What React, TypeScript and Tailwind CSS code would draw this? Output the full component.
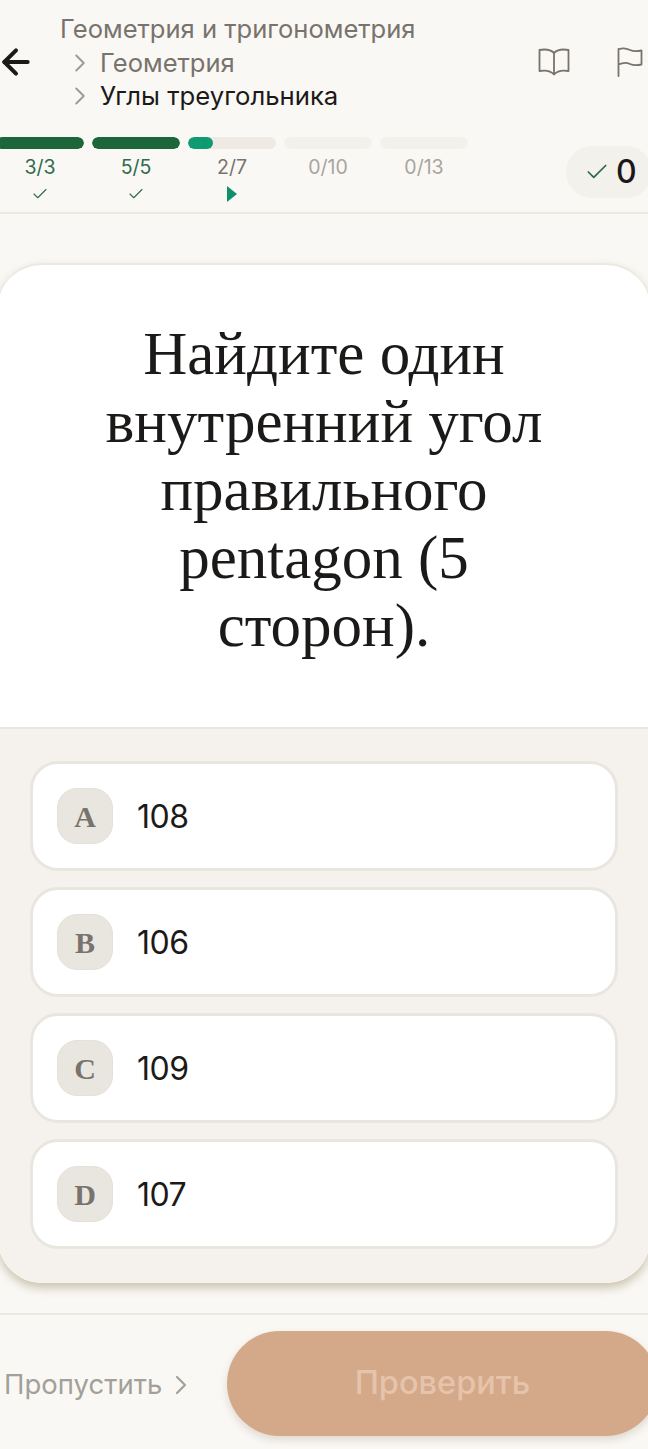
import React from 'react';
import { ArrowLeft, Check, ChevronRight } from 'lucide-react';

const sans = 'font-["Inter","Noto_Sans",sans-serif]';

const steps = [
  { label: '3/3', fill: 'w-full bg-[#1c6639]', text: 'text-[#2f6b4a]', mark: 'check' },
  { label: '5/5', fill: 'w-full bg-[#1c6639]', text: 'text-[#2f6b4a]', mark: 'check' },
  { label: '2/7', fill: 'w-[25px] bg-[#0f9a72]', text: 'text-[#78736c]', track: 'bg-[#efebe4]', mark: 'play' },
  { label: '0/10', fill: 'w-0', text: 'text-[#a8a49d]', track: 'bg-[#f3f1ec]' },
  { label: '0/13', fill: 'w-0', text: 'text-[#a8a49d]', track: 'bg-[#f3f1ec]' },
];

const options = [
  { key: 'A', value: '108' },
  { key: 'B', value: '106' },
  { key: 'C', value: '109' },
  { key: 'D', value: '107' },
];

function BookIcon() {
  return (
    <svg width="32" height="28" viewBox="0 0 32 28" fill="none" stroke="#78736c" strokeWidth="1.8" strokeLinejoin="round" className="shrink-0">
      <path d="M16 5 C13 2 7 1 1.5 2 V23 C7 22 13 23 16 26.5 C19 23 25 22 30.5 23 V2 C25 1 19 2 16 5 Z M16 5 V26.5" />
    </svg>
  );
}

function FlagIcon() {
  return (
    <svg width="26" height="30" viewBox="0 0 26 30" fill="none" stroke="#78736c" strokeWidth="1.8" strokeLinejoin="round" strokeLinecap="round" className="ml-[47px] mr-[5px] shrink-0">
      <path d="M1.5 2 V29 M1.5 2.5 C6 0.5 10 1.5 13 3 C16 4.5 20 4.5 24.5 3.5 V17.5 C20 18.5 16 18.5 13 17 C10 15.5 6 15.5 1.5 17.5" />
    </svg>
  );
}

function Header() {
  return (
    <header className="h-[214px] border-b-2 border-[#ece9e3] overflow-hidden">
      <div className="flex items-center h-[134px] pb-[10px]">
        <ArrowLeft size={40} strokeWidth={2.4} className="-ml-[4px] shrink-0 text-[#1c1a18]" />
        <div className="ml-[24px] flex-1 flex flex-col text-[25.55px] leading-[34px] text-[#78736c]">
          <span>Геометрия и тригонометрия</span>
          <span className="flex items-center pl-[5px]">
            <ChevronRight size={30} strokeWidth={1.6} className="text-[#a09c95] mr-[5px]" />
            Геометрия
          </span>
          <span className="flex items-center pl-[5px] -mt-[1px] text-[#1c1a18] text-[25.7px]">
            <ChevronRight size={30} strokeWidth={1.6} className="text-[#a09c95] mr-[5px]" />
            Углы треугольника
          </span>
        </div>
        <BookIcon />
        <FlagIcon />
      </div>
      <div className="flex justify-between">
        <div className="flex gap-2 -ml-[4px] mt-[3px]">
          {steps.map((s) => (
            <div key={s.label} className="w-[88px] flex flex-col items-center">
              <div className={`w-full h-3 rounded-full overflow-hidden ${s.track ?? ''}`}>
                <div className={`h-full rounded-full ${s.fill}`} />
              </div>
              <span className={`mt-[5px] text-[19.5px] leading-[26px] ${s.text}`}>{s.label}</span>
              {s.mark === 'check' && <Check size={18} strokeWidth={1.5} className="mt-[5px] text-[#2f6b4a]" />}
              {s.mark === 'play' && (
                <svg width="10" height="16" viewBox="0 0 10 16" className="mt-[6px] fill-[#0f8f6a]">
                  <path d="M0 0 L10 8 L0 16 Z" />
                </svg>
              )}
            </div>
          ))}
        </div>
        <div className="-mr-[4px] mt-[12px] w-[86px] h-[52px] rounded-full bg-[#f3f1ec] flex items-center pl-[18px] gap-[6px]">
          <Check size={26} strokeWidth={1.6} className="text-[#2f6b4a]" />
          <span className="text-[32px] leading-none font-medium text-[#1c1a18]">0</span>
        </div>
      </div>
    </header>
  );
}

function OptionRow({ optionKey, value }: { optionKey: string; value: string }) {
  return (
    <div className="h-[110px] rounded-[28px] bg-white border-[3px] border-[#e9e6e0] flex items-center pl-[24px]">
      <div className="w-[56px] h-[56px] rounded-[20px] bg-[#e9e6e0] border border-[#e4e1da] flex items-center justify-center font-['Liberation_Serif',serif] font-bold text-[30px] text-[#78736c]">
        {optionKey}
      </div>
      <span className="ml-[24px] pt-[2px] text-[32px] tracking-[-0.5px] text-[#1c1a18]">{value}</span>
    </div>
  );
}

export default function App() {
  return (
    <div className={`w-[648px] h-[1449px] overflow-hidden bg-[#faf8f5] ${sans}`}>
      <Header />
      <main className="-mx-[2px] mt-[49px] h-[1020px] rounded-[44px] bg-white border-t-2 border-[#ece9e3] shadow-[0_5px_10px_rgba(130,120,70,0.4)] overflow-hidden flex flex-col">
        <div className="h-[462px] flex items-center justify-center px-[90px] pb-[12px] text-center font-['Liberation_Serif',serif] text-[61px] leading-[68px] text-[#1c1a18]">
          Найдите один внутренний угол правильного pentagon (5 сторон).
        </div>
        <div className="flex-1 bg-[#f5f2ed] border-t-2 border-[#e9e6e0] pt-[32px] px-[32px] flex flex-col gap-[16px]">
          {options.map((o) => (
            <OptionRow key={o.key} optionKey={o.key} value={o.value} />
          ))}
        </div>
      </main>
      <footer className="mt-[30px] border-t-2 border-[#ece9e3] flex items-center h-[138px] pl-[4px]">
        <span className="flex items-center pt-[3px] text-[27.5px] text-[#a3a099]">
          Пропустить
          <ChevronRight size={32} strokeWidth={1.6} className="ml-[3px]" />
        </span>
        <button
          type="button"
          className="ml-auto -mr-[10px] w-[431px] h-[105px] rounded-full bg-[#d3a98a] text-[#e6c3ab] text-[32.5px] font-medium shadow-[0_4px_8px_rgba(120,90,60,0.2)]"
        >
          Проверить
        </button>
      </footer>
    </div>
  );
}
